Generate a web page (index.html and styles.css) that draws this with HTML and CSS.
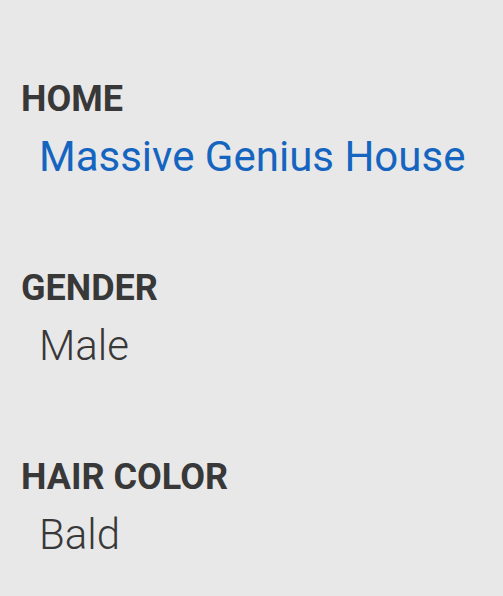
FILE: index.html
```html
<!DOCTYPE html>
<html>
<head>
<meta charset="utf-8">
<link rel="stylesheet" href="styles.css">
</head>
<body>
<dl class="details">
  <div class="field">
    <dt class="label">HOME</dt>
    <dd class="value link">Massive Genius House</dd>
  </div>
  <div class="field">
    <dt class="label">GENDER</dt>
    <dd class="value">Male</dd>
  </div>
  <div class="field">
    <dt class="label">HAIR COLOR</dt>
    <dd class="value">Bald</dd>
  </div>
</dl>
</body>
</html>
```
FILE: styles.css
```css
html, body {
  margin: 0;
  padding: 0;
  background: #e8e8e8;
}
body {
  font-family: Roboto, "Liberation Sans", sans-serif;
  width: 503px;
  height: 596px;
  overflow: hidden;
}
.details {
  margin: 0;
  padding: 77px 0 0 21px;
  display: flex;
  flex-direction: column;
  gap: 73px;
}
.field {
  display: flex;
  flex-direction: column;
}
.label {
  font-weight: 700;
  font-size: 36px;
  line-height: 44px;
  color: #383838;
  margin: 0;
}
.value {
  margin: 0 0 0 18px;
  font-size: 42px;
  line-height: 72px;
  font-weight: 300;
  color: #383838;
}
.value.link {
  font-weight: 400;
  color: #1565c0;
}
```
